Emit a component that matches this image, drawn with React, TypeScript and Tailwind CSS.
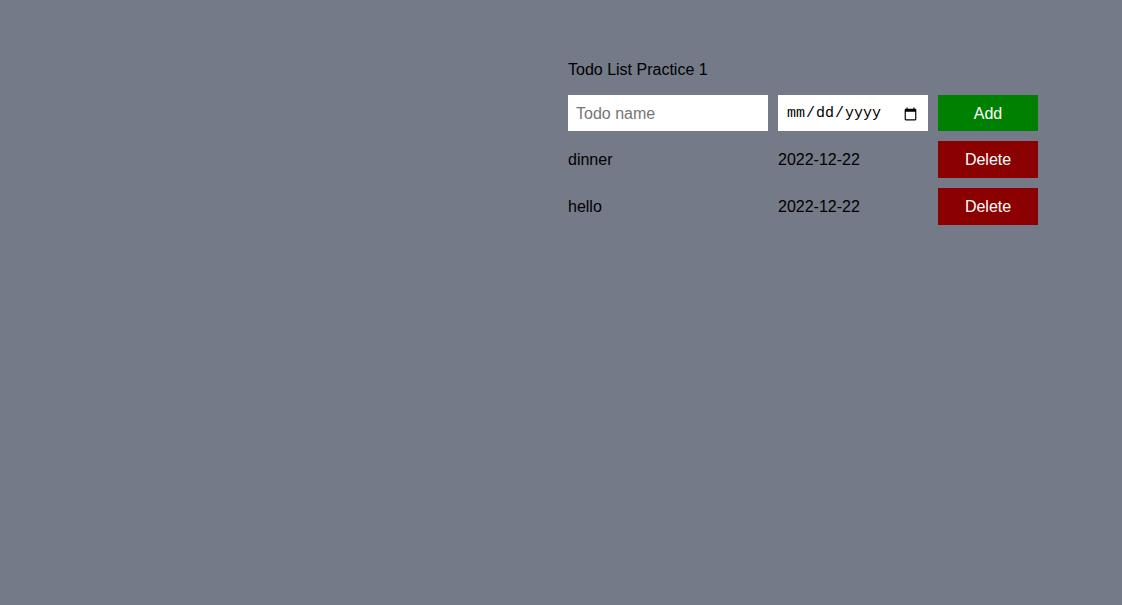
import React from "react";

const todos = [
  { name: "dinner", date: "2022-12-22" },
  { name: "hello", date: "2022-12-22" },
];

export default function App() {
  return (
    <div className="min-h-[605px] w-full bg-[#747a88] text-[16px] text-black" style={{ fontFamily: '"Liberation Sans", Arial, sans-serif' }}>
      <div className="grid grid-cols-2">
        <div />
        <div className="pl-[7px] pt-[58px]">
          <div className="h-[24px] leading-[24px]">Todo List Practice 1</div>
          <div className="mt-[13px] grid grid-cols-[200px_150px_100px] grid-rows-[36px_37px_37px] gap-x-[10px] gap-y-[10px] items-start">
            <input
              type="text"
              placeholder="Todo name"
              className="h-[36px] w-[200px] bg-white px-[8px] pt-[2px] text-[16px] text-black outline-none placeholder:text-[#757575]"
              style={{ fontFamily: '"Liberation Sans", Arial, sans-serif' }}
            />
            <input
              type="date"
              className="h-[36px] w-[150px] bg-white pl-[8px] pr-[8px] pt-[2px] text-[16px] text-black outline-none"
              style={{ fontFamily: '"Liberation Mono", "DejaVu Sans Mono", monospace', fontSize: "15px" }}
            />
            <button className="h-[36px] w-[100px] bg-[#008000] pt-[2px] text-white">Add</button>
            {todos.map((t, i) => (
              <React.Fragment key={i}>
                <div className="h-[37px] leading-[37px]">{t.name}</div>
                <div className="h-[37px] leading-[37px]">{t.date}</div>
                <button className="h-[37px] w-[100px] bg-[#8b0000] text-white">Delete</button>
              </React.Fragment>
            ))}
          </div>
        </div>
      </div>
    </div>
  );
}
